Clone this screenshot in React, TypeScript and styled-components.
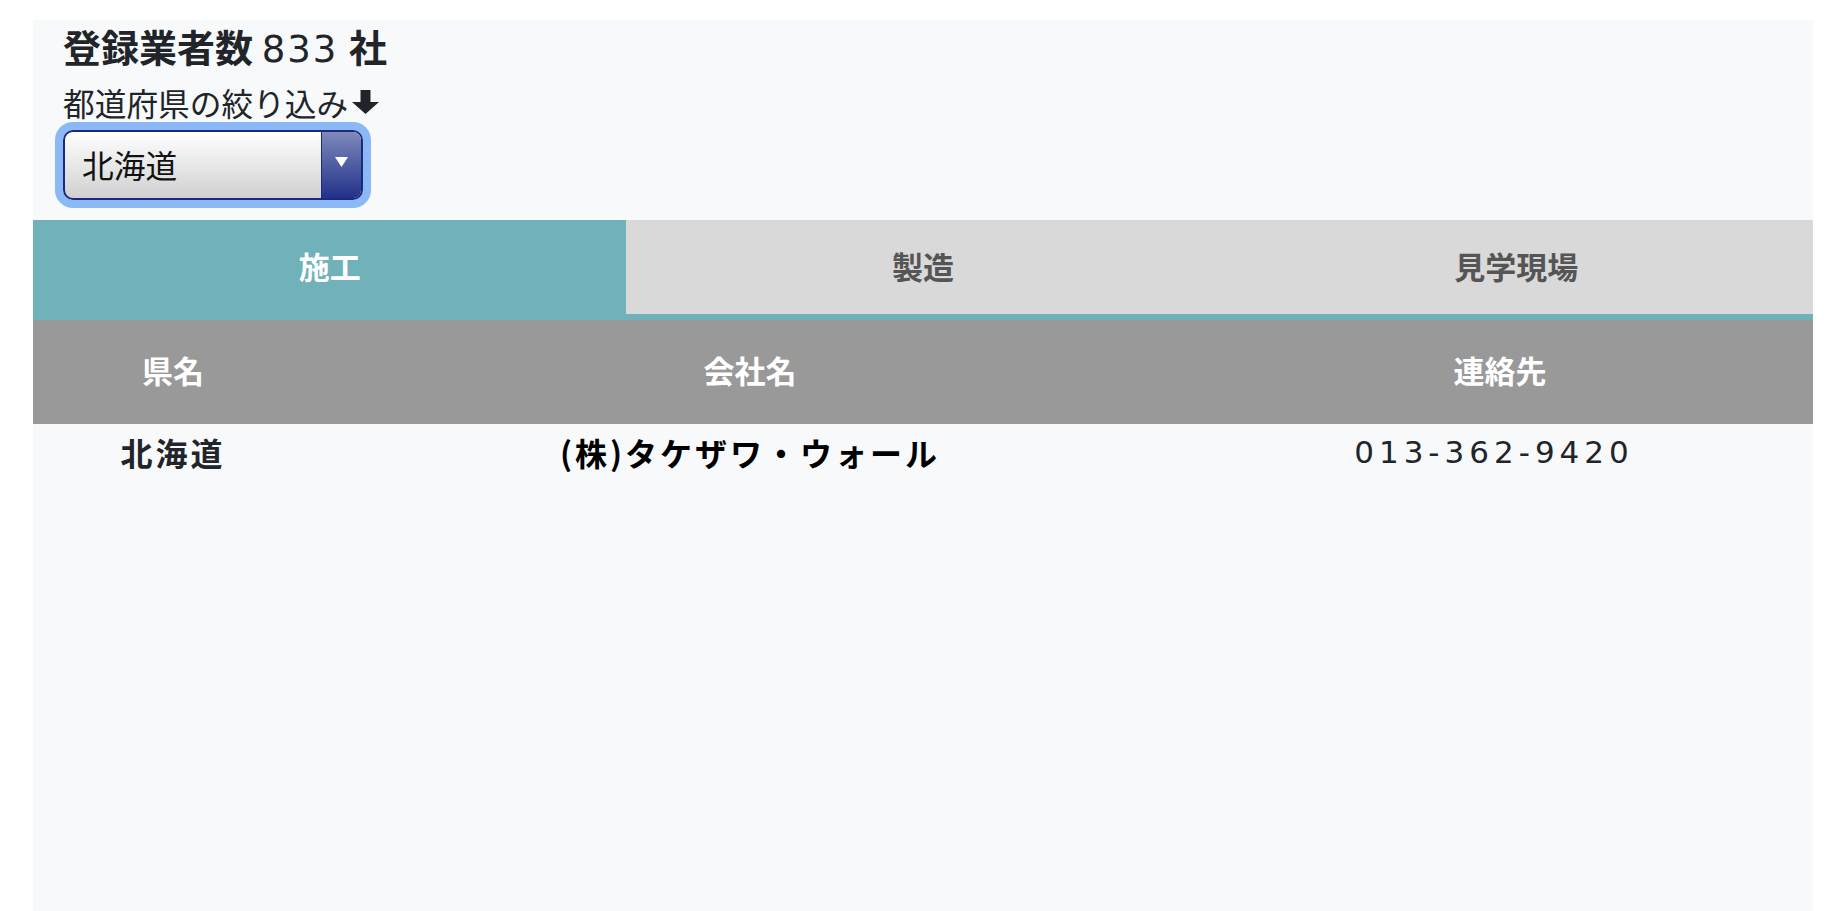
import styled, { createGlobalStyle } from "styled-components";

const GlobalStyle = createGlobalStyle`
  html, body {
    margin: 0;
    padding: 0;
    background-color: #ffffff;
    overflow: hidden;
  }
  body {
    font-family: "Noto Sans CJK JP", "Noto Sans", sans-serif;
    color: #212529;
  }
`;

const StyledPage = styled.div`
  padding: 20px 16px 0 33px;
`;

const StyledPanel = styled.div`
  background-color: #f8f9fa;
  min-height: 891px;
`;

const StyledHead = styled.div`
  padding: 3px 30px 0;
  display: flex;
  flex-direction: column;
  align-items: flex-start;
`;

const StyledTitle = styled.h2`
  margin: 0 0 14px;
  height: 45px;
  font-size: 38px;
  line-height: 45px;
  font-weight: 700;
  white-space: nowrap;
`;

const StyledCount = styled.span`
  font-family: "DejaVu Sans", sans-serif;
  font-weight: 400;
  font-size: 37px;
  line-height: 1;
  letter-spacing: 2px;
  margin-right: 2px;
`;

const StyledFilterLabel = styled.div`
  font-size: 31.7px;
  line-height: 40px;
  display: flex;
  align-items: center;
  gap: 4px;
`;

const StyledSelectWrap = styled.div`
  position: relative;
  margin-top: 8px;
  width: 300px;
  height: 70px;
  border-radius: 10px;
  box-shadow: 0 0 0 8px #8ab9f5;
`;

const StyledSelect = styled.select`
  appearance: none;
  -webkit-appearance: none;
  width: 100%;
  height: 100%;
  border: 2px solid #1b2a7e;
  border-radius: 10px;
  background: linear-gradient(#ffffff, #d0d0d2);
  padding: 0 0 3px 17px;
  font-family: inherit;
  font-size: 31.7px;
  color: #111;
  outline: none;
`;

const StyledSelectArrow = styled.span`
  position: absolute;
  top: 2px;
  right: 2px;
  bottom: 2px;
  width: 40px;
  border-left: 1px solid #1b2a7e;
  border-radius: 0 8px 8px 0;
  background: linear-gradient(#7e89bc, #22318a);
  display: flex;
  justify-content: center;
  padding-top: 25px;
  box-sizing: border-box;
  pointer-events: none;
`;

const StyledTabBar = styled.div`
  margin-top: 20px;
  display: flex;
  border-bottom: 6px solid #71b1ba;
`;

const StyledTab = styled.div<{ $active?: boolean }>`
  flex: 1;
  height: 94px;
  padding-bottom: 4px;
  box-sizing: border-box;
  display: flex;
  align-items: center;
  justify-content: center;
  font-size: 31px;
  font-weight: 700;
  background-color: ${({ $active }) => ($active ? "#71b1ba" : "#d9d9d9")};
  color: ${({ $active }) => ($active ? "#ffffff" : "#555555")};
  cursor: pointer;
`;

const StyledHeadRow = styled.div`
  display: grid;
  grid-template-columns: 280fr 874fr 626fr;
  height: 104px;
  padding-bottom: 6px;
  box-sizing: border-box;
  align-items: center;
  background-color: #999999;
  color: #ffffff;
  font-size: 31px;
  font-weight: 700;
  text-align: center;
`;

const StyledRow = styled.div`
  display: grid;
  grid-template-columns: 280fr 874fr 626fr;
  padding-top: 6px;
  text-align: center;
  font-size: 32px;
  line-height: 45px;
`;

const StyledCell = styled.div<{ $tone?: "name" | "phone" }>`
  font-family: ${({ $tone }) =>
    $tone === "phone" ? '"DejaVu Sans", sans-serif' : "inherit"};
  font-size: ${({ $tone }) => ($tone === "phone" ? "31px" : "32px")};
  font-weight: ${({ $tone }) => ($tone === "phone" ? 400 : 700)};
  letter-spacing: ${({ $tone }) => ($tone === "phone" ? "5px" : "3px")};
  padding-right: ${({ $tone }) => ($tone === "phone" ? "12px" : "0")};
  color: ${({ $tone }) => ($tone === "name" ? "#000000" : "#212529")};
`;

const tabs = ["施工", "製造", "見学現場"];

const companies = [
  { pref: "北海道", name: "(株)タケザワ・ウォール", tel: "013-362-9420" },
];

const DownArrow = () => (
  <svg width="27" height="24" viewBox="0 0 27 24">
    <path d="M8.5 0h10v12h8.5L13.5 24 0 12h8.5z" fill="#212529" />
  </svg>
);

const App = () => {
  return (
    <StyledPage>
      <GlobalStyle />
      <StyledPanel>
        <StyledHead>
          <StyledTitle>
            登録業者数 <StyledCount>833</StyledCount> 社
          </StyledTitle>
          <StyledFilterLabel>
            都道府県の絞り込み
            <DownArrow />
          </StyledFilterLabel>
          <StyledSelectWrap>
            <StyledSelect defaultValue="北海道">
              <option value="北海道">北海道</option>
              <option value="青森県">青森県</option>
              <option value="岩手県">岩手県</option>
            </StyledSelect>
            <StyledSelectArrow>
              <svg width="13" height="10" viewBox="0 0 13 10">
                <path d="M0 0h13L6.5 10z" fill="#ffffff" />
              </svg>
            </StyledSelectArrow>
          </StyledSelectWrap>
        </StyledHead>

        <StyledTabBar>
          {tabs.map((tab, i) => (
            <StyledTab key={tab} $active={i === 0}>
              {tab}
            </StyledTab>
          ))}
        </StyledTabBar>

        <StyledHeadRow>
          <div>県名</div>
          <div>会社名</div>
          <div>連絡先</div>
        </StyledHeadRow>

        {companies.map((c) => (
          <StyledRow key={c.name}>
            <StyledCell>{c.pref}</StyledCell>
            <StyledCell $tone="name">{c.name}</StyledCell>
            <StyledCell $tone="phone">{c.tel}</StyledCell>
          </StyledRow>
        ))}
      </StyledPanel>
    </StyledPage>
  );
};

export default App;
